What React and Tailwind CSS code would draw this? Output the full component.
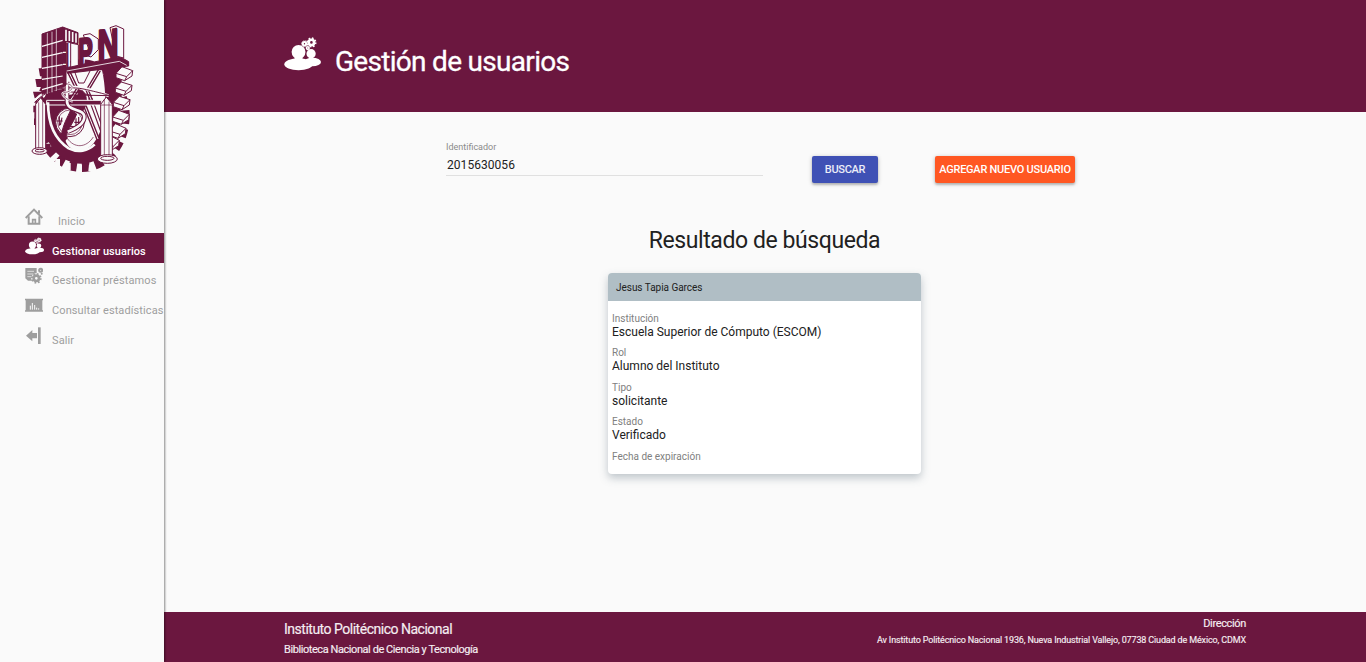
import React from "react";

const GUINDA = "#6b173f";

const UsersGear = ({ className }) => (
  <svg viewBox="0 0 112 100" className={className} fill="currentColor">
    <ellipse cx="44" cy="81" rx="43" ry="18" />
    <ellipse cx="86" cy="74" rx="26" ry="13" />
    <circle cx="44" cy="44" r="21" />
    <rect x="32" y="58" width="24" height="12" />
    <circle cx="82" cy="49" r="14" />
    <rect x="76" y="60" width="12" height="8" />
    <circle cx="83" cy="15" r="8" fill="none" stroke="currentColor" strokeWidth="8" />
    <circle cx="83" cy="15" r="13" fill="none" stroke="currentColor" strokeWidth="5" strokeDasharray="5 5.2" />
    <circle cx="62" cy="19" r="5" fill="none" stroke="currentColor" strokeWidth="6" />
    <circle cx="62" cy="19" r="9" fill="none" stroke="currentColor" strokeWidth="3" strokeDasharray="3.5 3.5" />
    <circle cx="72" cy="32" r="4" fill="none" stroke="currentColor" strokeWidth="5" />
  </svg>
);

const HomeIcon = () => (
  <svg viewBox="0 0 54 54" className="h-[18px] w-[18px]" fill="none" stroke="currentColor" strokeWidth="6">
    <path d="M2 30 27 5 52 30" />
    <path d="M11 25v22h32V25M42 17V7" />
    <path d="M23 48V35h8v13" strokeWidth="5" />
  </svg>
);

const LoanIcon = () => (
  <svg viewBox="0 0 54 54" className="h-[18px] w-[18px]">
    <path d="M1 3h34v38H9l-8-7z" fill="currentColor" />
    <path d="M7 13h20M7 21h18M7 29h14" stroke="#fafafa" strokeWidth="2" />
    <circle cx="34" cy="34" r="15" fill="#fafafa" />
    <circle cx="34" cy="34" r="8" fill="none" stroke="currentColor" strokeWidth="8" />
    <circle cx="34" cy="34" r="13" fill="none" stroke="currentColor" strokeWidth="6" strokeDasharray="5 5.2" />
    <circle cx="47" cy="10" r="4.500" fill="none" stroke="currentColor" strokeWidth="6" />
    <circle cx="50" cy="20" r="3" fill="currentColor" />
  </svg>
);

const StatsIcon = () => (
  <svg viewBox="0 0 54 54" className="h-[18px] w-[18px]">
    <path d="M0 5h54v5h-2v30h2v4H0v-4h2V10H0z" fill="currentColor" />
    <path d="M16 38V26M22 38V18M29 38V24M35 38v-6M41 38v-4" stroke="#fafafa" strokeWidth="3" />
  </svg>
);

const ExitIcon = () => (
  <svg viewBox="0 0 54 54" className="h-[18px] w-[18px]" fill="currentColor">
    <path d="M3 26 22 9v9h14v16H22v9z" />
    <path d="M39 1h8v50h-8z" />
  </svg>
);

const rightTeeth = [
  [300, 155, 0], [298, 199, 2], [292, 242, 2], [290, 286, 0], [280, 328, -2], [260, 364, -4],
];

const Emblem = () => (
  <svg viewBox="0 0 375 510" className="h-[170px] w-[125px]" stroke={GUINDA} strokeWidth="3" strokeLinejoin="round">
    <ellipse cx="186" cy="302" rx="126" ry="152" fill="none" strokeWidth="34" strokeDasharray="24 15" />
    <ellipse cx="184" cy="300" rx="118" ry="146" fill={GUINDA} stroke="none" />
    <path d="M245 150h60v118h-40z" fill={GUINDA} stroke="none" />
    <path d="M56 160h16v24H60zM46 192h24v24H50zM39 230h30v20H44zM40 272h14v20H40zM42 310h14v20H42zM52 352h20v22H52zM68 386h24v22H72z" fill={GUINDA} stroke="none" />
    {rightTeeth.map(([x, y, d]) => (
      <g key={y} fill="#fafafa">
        <path d={`M${x - 12} ${y + 20} ${x + 6} ${y + d} ${x + 38} ${y + 12} ${x + 36} ${y + 28} ${x + 14} ${y + 42} ${x - 12} ${y + 33}z`} />
        <path d={`M${x - 12} ${y + 20} ${x + 20} ${y + 30} ${x + 38} ${y + 12}M${x + 20} ${y + 30}L${x + 14} ${y + 42}`} fill="none" />
      </g>
    ))}
    {[[106, 432], [138, 444], [172, 450], [207, 448]].map(([x, y]) => (
      <path key={x} d={`M${x} ${y}h14v22l-16-2z`} fill="#fafafa" stroke="none" />
    ))}
    <path d="M134 166h112c10 40 14 110 4 150-8 44-32 88-68 92-30 0-44-20-48-40z" fill="#fafafa" stroke="none" />
    <path d="M100 240h74c20 10 18 40 12 54l-20 50-36 40-30-60z" fill={GUINDA} stroke="none" />
    <path d="M146 170l26 54-22 34M238 166l-36 60 12 30" fill="none" strokeWidth="11" />
    <path d="M146 170l26 54-22 34M238 166l-36 60 12 30" fill="none" stroke="#fafafa" strokeWidth="3" />
    <path d="M164 170l12 34h16l20-40z" fill="#fafafa" />
    <path d="M192 266l42 106" fill="none" strokeWidth="11" />
    <path d="M192 266l42 106" fill="none" stroke="#fafafa" strokeWidth="3" />
    <path d="M206 250l38 104M216 250l28 78" fill="none" strokeWidth="3.500" />
    <path d="M176 224c28 0 30 50 8 68l-12-40z" fill={GUINDA} />
    <path d="M46 256C80 218 140 208 200 222s50 18 66 20" fill="none" stroke="#fafafa" strokeWidth="9" />
    <path d="M44 262C80 222 140 210 200 224s55 14 70 18M60 258C90 232 140 220 215 242M44 262l110-22 118 2" fill="none" strokeWidth="3" />
    <path d="M80 256h164v14H80z" fill={GUINDA} stroke="#fafafa" />
    <path d="M84 262c0 60 18 110 62 138 28 14 58 8 78-12" fill="none" stroke="#fafafa" strokeWidth="8" />
    <path d="M140 362c20 40 64 38 82-4-10-24-70-20-82 4z" fill="#fafafa" stroke="none" />
    <path d="M142 370c20 30 56 30 78-4" fill="none" strokeWidth="2" />
    <circle cx="150" cy="322" r="43" fill="#fafafa" />
    <circle cx="150" cy="322" r="37" fill="none" strokeWidth="2" />
    <path d="M152 285c-10 24-22 40-28 76l13 6c6-26 26-48 33-70z" fill={GUINDA} />
    <path d="M118 304v28M110 318h18M126 308l-5 22M168 310v22M176 306v22M163 322h22M150 334l32 3" fill="none" strokeWidth="3.500" />
    <path d="M141 200v60c0 34 52 18 52 46 0 20-24 34-50 44" fill="none" strokeWidth="14" />
    <path d="M141 190v68c0 34 52 20 52 48 0 20-24 34-50 44" fill="none" stroke="#fafafa" strokeWidth="8" />
    <path d="M136 206c32 2 22 24 0 26s4 22 22 28" fill="none" stroke="#fafafa" strokeWidth="7" />
    <path d="M136 206c32 2 22 24 0 26s4 22 22 28" fill="none" strokeWidth="2" />
    <g fill="#fafafa">
      <path d="M47 268l15-20 15 20v138H47z" />
      <path d="M56 262v145M68 257v150" fill="none" strokeWidth="2" />
      <ellipse cx="59" cy="408" rx="23" ry="10" />
      <ellipse cx="59" cy="407" rx="14" ry="4" />
      <path d="M242 268l17-22 18 22v157h-35z" />
      <path d="M253 254v168M267 260v161M242 270h35" fill="none" strokeWidth="2" />
      <ellipse cx="262" cy="432" rx="30" ry="13" />
      <ellipse cx="262" cy="430" rx="20" ry="6" />
    </g>
    <path d="M66 57 128 36v180L66 238z" fill={GUINDA} />
    <path d="M128 36l46 17v33l-36-6v130l-10 8z" fill={GUINDA} />
    <path d="M66 94l62-18M66 127l62-14M66 160l62-11M66 193l62-10M66 224l62-18" stroke="#fafafa" strokeWidth="3.500" />
    <path d="M82 54v182M96 50v182M109 43v185" stroke="#fafafa" strokeWidth="2" />
    <path d="M138 44v34M148 48v30M158 51v30M168 55v28" stroke="#fafafa" strokeWidth="5" />
    <path d="M129 112h11M129 148h11" stroke="#fafafa" strokeWidth="4" />
    <path d="M134 159l166-34 26 15v13l-183 22z" fill={GUINDA} />
    <path d="M140 168l158-29 22 12" fill="none" stroke="#fafafa" strokeWidth="2.500" />
    <path d="M152 84l23 5v62l-23 5z" fill="#fafafa" />
    <path d="M190 60l20-4 25 16v32l-22 22-18-6 14-12z" fill="#fafafa" />
    <path d="M270 38l18-6 23 10v87l-23-6z" fill="#fafafa" />
    <path d="M288 38v90" strokeWidth="6" />
    <g fill={GUINDA} strokeWidth="8" fontFamily="Liberation Sans" fontWeight="700">
      <text transform="translate(136 158) skewY(-5) scale(.4 1)" fontSize="106" strokeWidth="2">I</text>
      <text transform="translate(175 152) skewY(-5) scale(.56 1)" fontSize="116">P</text>
      <text transform="translate(233 134) skewY(-5) scale(.68 1)" fontSize="126">N</text>
    </g>
  </svg>
);

const nav = [
  { label: "Inicio", icon: <HomeIcon />, gap: "ml-[15px]" },
  { label: "Gestionar usuarios", icon: <UsersGear className="-mt-px h-[18px] w-[19px]" />, active: true, gap: "ml-2" },
  { label: "Gestionar préstamos", icon: <LoanIcon />, gap: "ml-[9px]" },
  { label: "Consultar estadísticas", icon: <StatsIcon />, gap: "ml-[9px]" },
  { label: "Salir", icon: <ExitIcon />, gap: "ml-[9px]" },
];

const details = [
  ["Institución", "Escuela Superior de Cómputo (ESCOM)"],
  ["Rol", "Alumno del Instituto"],
  ["Tipo", "solicitante"],
  ["Estado", "Verificado"],
  ["Fecha de expiración", ""],
];

export default function App() {
  return (
    <div className="flex h-[662px] w-full overflow-hidden bg-[#fafafa] font-['Roboto',sans-serif] text-[#212121]">
      <aside className="z-10 w-[164px] shrink-0 bg-[#fafafa] shadow-[1px_0_2px_rgba(0,0,0,0.45)]">
        <div className="h-[203px] pl-5 pt-[15px]">
          <Emblem />
        </div>
        <nav>
          {nav.map((n) => (
            <a
              key={n.label}
              className={`flex items-start whitespace-nowrap pl-[25px] ${n.active ? "-mb-[0.3px] h-[30px] bg-[#6b173f] font-medium tracking-[0.05px] text-white" : "h-[29.7px] tracking-[0.1px] text-[#9e9e9e]"}`}
            >
              <span className="mt-[5px] flex h-[18px] shrink-0">{n.icon}</span>
              <span className={`mt-[11px] text-[11px] leading-4 ${n.gap}`}>{n.label}</span>
            </a>
          ))}
        </nav>
      </aside>

      <div className="flex min-w-0 flex-1 flex-col">
        <header className="flex h-28 shrink-0 items-start bg-[#6b173f] pl-[120px] text-white">
          <UsersGear className="mt-[37px] h-[34px] w-[37px]" />
          <h1 className="ml-[14px] mt-[42px] text-[28px] leading-10 tracking-[-0.7px] [-webkit-text-stroke:0.3px]">Gestión de usuarios</h1>
        </header>

        <main className="flex-1">
          <div className="flex items-start pl-[282px] pt-[29px]">
            <div className="w-[317px] border-b border-[#e0e0e0] pb-[2px]">
              <label className="block text-[9px] leading-[13px] text-[#8a8a8a]">Identificador</label>
              <div className="mt-[3px] pl-px text-xs leading-4 tracking-[0.05px]">2015630056</div>
            </div>
            <button className="ml-[49px] mt-[15px] h-[27px] w-[66px] rounded-[2px] bg-[#3f51b5] pt-[2px] text-[11px] font-medium tracking-[-0.3px] text-white/90 shadow-[0_2px_2px_rgba(0,0,0,0.14),0_1px_4px_rgba(0,0,0,0.25)]">BUSCAR</button>
            <button className="ml-[57px] mt-[15px] h-[27px] w-[140px] whitespace-nowrap rounded-[2px] bg-[#ff5722] pt-[2px] text-[11px] font-medium tracking-[-0.25px] text-white shadow-[0_2px_2px_rgba(0,0,0,0.14),0_1px_4px_rgba(0,0,0,0.25)]">AGREGAR NUEVO USUARIO</button>
          </div>

          <section className="ml-[444px] mt-[42px] w-[313px]">
            <h2 className="text-center text-[23px] leading-8 tracking-[-0.42px]">Resultado de búsqueda</h2>
            <article className="mt-4 h-[201px] overflow-hidden rounded bg-white shadow-[0_4px_8px_rgba(80,100,115,0.35)]">
              <div className="h-7 bg-[#b0bec5] pl-2 pt-px text-[10px] leading-7 tracking-[-0.03px]">Jesus Tapia Garces</div>
              <dl className="pl-1 pt-[11.5px]">
                {details.map(([k, v]) => (
                  <div key={k} className="h-[34.5px]">
                    <dt className="text-[10px] leading-3 text-[#808080]">{k}</dt>
                    <dd className="text-xs leading-[14px]">{v}</dd>
                  </div>
                ))}
              </dl>
            </article>
          </section>
        </main>

        <footer className="flex h-[50px] shrink-0 justify-between bg-[#6b173f] pl-[120px] pr-[120px] text-[#f5eef2] [-webkit-text-stroke:0.15px]">
          <div className="whitespace-nowrap">
            <div className="mt-[9px] text-sm leading-4 tracking-[-0.49px]">Instituto Politécnico Nacional</div>
            <div className="mt-[5px] text-[11px] leading-4 tracking-[-0.43px]">Biblioteca Nacional de Ciencia y Tecnología</div>
          </div>
          <div className="whitespace-nowrap text-right">
            <div className="mt-[4px] text-[11px] leading-4 tracking-[-0.35px]">Dirección</div>
            <div className="text-[9px] leading-4 tracking-[-0.145px]">Av Instituto Politécnico Nacional 1936, Nueva Industrial Vallejo, 07738 Ciudad de México, CDMX</div>
          </div>
        </footer>
      </div>
    </div>
  );
}
